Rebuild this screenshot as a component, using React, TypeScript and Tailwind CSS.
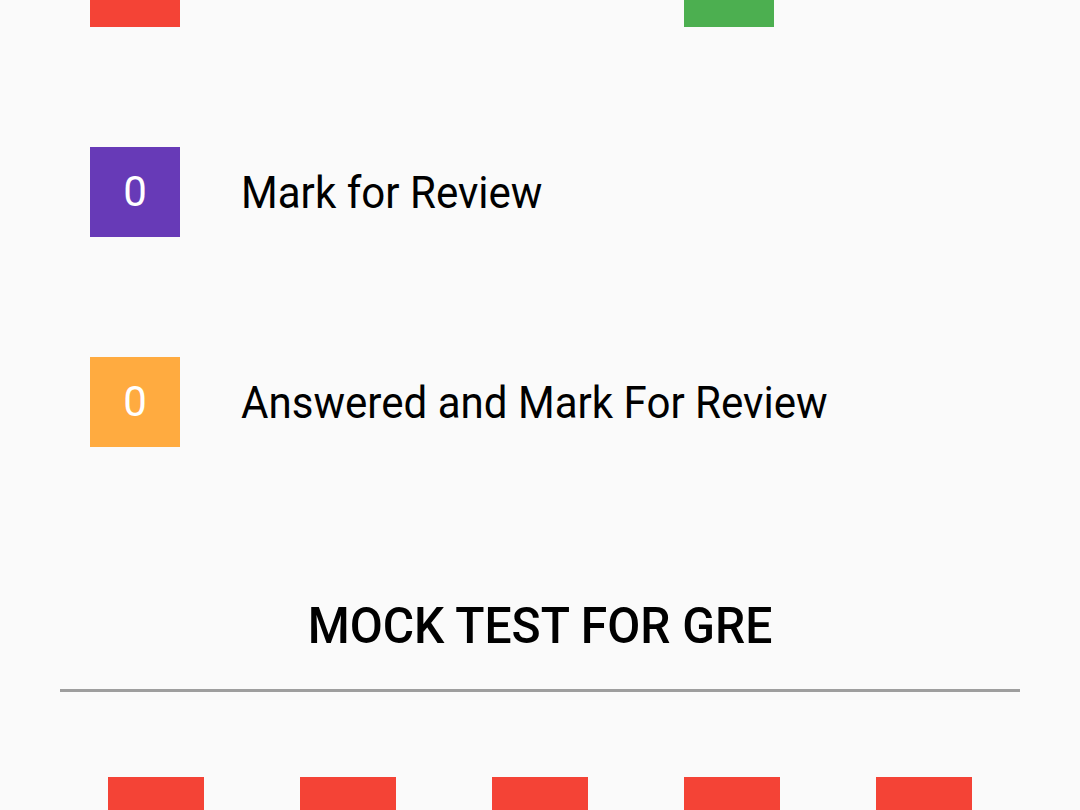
import React from 'react'

const legend = [
    { color: 'bg-[#673ab7]', count: 0, label: 'Mark for Review' },
    { color: 'bg-[#ffab40]', count: 0, label: 'Answered and Mark For Review' },
]

function CountBox({ color, count }: { color: string; count: number }) {
    return (
        <div className={`w-[90px] h-[90px] shrink-0 ${color} flex items-center justify-center text-white text-[42px] leading-none`}>
            {count}
        </div>
    )
}

export default function App() {
    return (
        <div className="h-[810px] overflow-hidden bg-[#fafafa] font-['Roboto',sans-serif] text-black">
            {/* first row is scrolled mostly out of view */}
            <div className="mt-[-63px] flex px-[90px]">
                <div className="w-[594px] flex items-center">
                    <CountBox color="bg-[#f44336]" count={0} />
                </div>
                <div className="flex items-center">
                    <CountBox color="bg-[#4caf50]" count={0} />
                </div>
            </div>

            <div className="flex flex-col gap-[120px] mt-[120px] px-[90px]">
                {legend.map((item) => (
                    <div key={item.label} className="flex items-center">
                        <CountBox color={item.color} count={item.count} />
                        <span className="ml-[61px] text-[45px] leading-none whitespace-nowrap origin-left scale-x-[0.935] inline-block">
                            {item.label}
                        </span>
                    </div>
                ))}
            </div>

            <div className="mt-[154px] flex justify-center">
                <h1 className="text-[50px] leading-none font-medium whitespace-nowrap scale-x-[0.96]">MOCK TEST FOR GRE</h1>
            </div>

            <div className="mx-[60px] mt-[38px] h-[3px] bg-[#9e9e9e]" />

            <div className="mx-[60px] mt-[85px] grid grid-cols-5">
                {[1, 2, 3, 4, 5].map((n) => (
                    <div key={n} className="flex justify-center">
                        <div className="w-[96px] h-[96px] pt-[16px] bg-[#f44336] flex items-center justify-center text-white text-[40px] leading-none">
                            {n}
                        </div>
                    </div>
                ))}
            </div>
        </div>
    )
}
